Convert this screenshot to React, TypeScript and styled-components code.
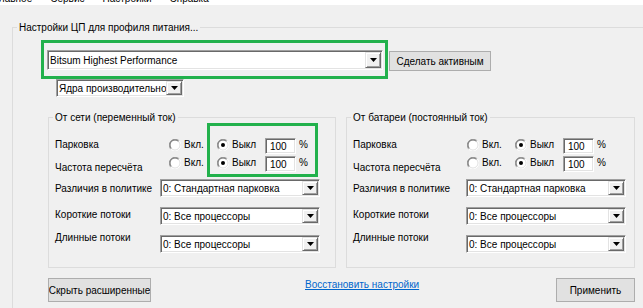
import React from "react";
import styled, { createGlobalStyle } from "styled-components";

const GREEN = "#22b14c";

const GlobalStyle = createGlobalStyle`
  html, body {
    margin: 0;
    padding: 0;
    background: #f0f0f0;
  }
`;

const Window = styled.div`
  width: 643px;
  height: 308px;
  overflow: hidden;
  background: #f0f0f0;
  font-family: "Liberation Sans", Arial, sans-serif;
  font-size: 10px;
  line-height: 13px;
  color: #000;
`;

const MenuBar = styled.div`
  height: 5px;
  background: #fff;
  overflow: hidden;
  display: flex;
  gap: 18px;
`;

const MenuItem = styled.span`
  margin-top: -8px;
  white-space: nowrap;
  &:first-child {
    margin-left: -6px;
  }
`;

const Page = styled.div`
  padding: 22px 0 0 12px;
`;

const GroupBox = styled.div<{ $width: number; $padBottom?: number }>`
  box-sizing: border-box;
  width: ${(p) => p.$width}px;
  border: 1px solid #dcdcdc;
  padding-bottom: ${(p) => p.$padBottom ?? 0}px;
`;

const GroupTitle = styled.div`
  width: max-content;
  margin: -7px 0 0 4px;
  padding: 0 2px;
  background: #f0f0f0;
  white-space: nowrap;
`;

const OuterContent = styled.div`
  padding-left: 28px;
  min-height: 300px;
`;

const TopRow = styled.div`
  display: flex;
  align-items: flex-start;
  margin-top: 6px;
`;

const Highlight = styled.div<{ $on?: boolean; $pad: string }>`
  border: 3px solid ${(p) => (p.$on ? GREEN : "transparent")};
  padding: ${(p) => p.$pad};
`;

const Button = styled.div<{ $w: number; $h: number }>`
  box-sizing: border-box;
  width: ${(p) => p.$w}px;
  height: ${(p) => p.$h}px;
  background: #e1e1e1;
  border: 1px solid #adadad;
  display: flex;
  align-items: center;
  justify-content: center;
  white-space: nowrap;
  overflow: hidden;
  flex: none;
`;

const ActiveButton = styled(Button)`
  margin: 11px 0 0 1px;
`;

const ComboFrame = styled.div<{ $w: number; $h: number }>`
  box-sizing: border-box;
  display: flex;
  flex: none;
  width: ${(p) => p.$w}px;
  height: ${(p) => p.$h}px;
  background: #fff;
  border: 1px solid;
  border-color: #a0a0a0 #ffffff #ffffff #a0a0a0;
  box-shadow: inset 1px 1px 0 #696969, inset -1px -1px 0 #e3e3e3;
  padding: 1px;
`;

const ComboText = styled.div`
  flex: 1;
  min-width: 0;
  overflow: hidden;
  white-space: nowrap;
  padding-left: 1px;
  display: flex;
  align-items: center;
`;

const DropButton = styled.div`
  box-sizing: border-box;
  width: 16px;
  flex: none;
  display: flex;
  align-items: center;
  justify-content: center;
  background: #f0f0f0;
  border: 1px solid;
  border-color: #e3e3e3 #696969 #696969 #e3e3e3;
  box-shadow: inset 1px 1px 0 #fff, inset -1px -1px 0 #a0a0a0;
`;

const CoreCombo = styled.div`
  margin-left: 15px;
`;

const GroupsRow = styled.div`
  display: flex;
  gap: 10px;
  margin: 20px 0 0 7px;
`;

const SwitchSection = styled.div`
  display: flex;
  margin-top: -1px;
`;

const LabelCol = styled.div`
  box-sizing: border-box;
  width: 120px;
  padding: 15px 0 0 6px;
  display: flex;
  flex-direction: column;
  gap: 10px;
  white-space: nowrap;
`;

const OnCol = styled.div`
  width: 38px;
  padding-top: 15px;
  display: flex;
  flex-direction: column;
  gap: 2px;
`;

const RowStack = styled.div`
  display: flex;
  flex-direction: column;
  gap: 2px;
`;

const SwitchRow = styled.div`
  display: flex;
  align-items: flex-start;
  height: 16px;
`;

const RadioItem = styled.div<{ $w?: number }>`
  display: flex;
  align-items: center;
  gap: 3px;
  height: 13px;
  width: ${(p) => (p.$w ? `${p.$w}px` : "auto")};
  flex: none;
  white-space: nowrap;
`;

const ValueInput = styled.div`
  box-sizing: border-box;
  width: 31px;
  height: 16px;
  background: #fff;
  border: 1px solid;
  border-color: #a0a0a0 #ffffff #ffffff #a0a0a0;
  box-shadow: inset 1px 1px 0 #696969, inset -1px -1px 0 #e3e3e3;
  padding-left: 4px;
  display: flex;
  align-items: center;
`;

const Percent = styled.span`
  margin-left: 3px;
`;

const ComboRows = styled.div`
  margin-top: 2px;
  display: flex;
  flex-direction: column;
  gap: 10px;
`;

const ComboRow = styled.div`
  display: flex;
  align-items: flex-start;
`;

const RowLabel = styled.div<{ $w: number; $shift: number }>`
  box-sizing: border-box;
  width: ${(p) => p.$w}px;
  padding-left: 6px;
  margin-top: ${(p) => p.$shift}px;
  white-space: nowrap;
  flex: none;
`;

const BottomRow = styled.div`
  display: flex;
  align-items: flex-start;
  width: 587px;
  margin: 10px 0 0 7px;
`;

const RestoreLink = styled.a`
  color: #0066cc;
  text-decoration: underline;
  margin: 0 0 0 154px;
  cursor: pointer;
  white-space: nowrap;
`;

const ApplyButton = styled(Button)`
  margin-left: auto;
`;

const Arrow = () => (
  <svg width="7" height="4" viewBox="0 0 7 4">
    <polygon points="0,0 7,0 3.5,4" fill="#000" />
  </svg>
);

const Radio = ({ checked }: { checked?: boolean }) => (
  <svg width="12" height="12" viewBox="0 0 12 12" style={{ flex: "none" }}>
    <circle cx="6" cy="6" r="5" fill="#fff" />
    <path d="M1.76 10.24 A6 6 0 0 1 10.24 1.76" stroke="#a0a0a0" fill="none" strokeWidth="1" />
    <path d="M10.24 1.76 A6 6 0 0 1 1.76 10.24" stroke="#ffffff" fill="none" strokeWidth="1" />
    <path d="M2.46 9.54 A5 5 0 0 1 9.54 2.46" stroke="#696969" fill="none" strokeWidth="1" />
    <path d="M9.54 2.46 A5 5 0 0 1 2.46 9.54" stroke="#e3e3e3" fill="none" strokeWidth="1" />
    {checked && <circle cx="6" cy="6" r="2" fill="#000" />}
  </svg>
);

const Combo = ({ w, h, text }: { w: number; h: number; text: string }) => (
  <ComboFrame $w={w} $h={h}>
    <ComboText>{text}</ComboText>
    <DropButton>
      <Arrow />
    </DropButton>
  </ComboFrame>
);

interface PowerGroupProps {
  title: string;
  width: number;
  labelWidth: number;
  highlight?: boolean;
}

const comboRows = [
  { label: "Различия в политике", value: "0: Стандартная парковка", shift: 3 },
  { label: "Короткие потоки", value: "0: Все процессоры", shift: 1 },
  { label: "Длинные потоки", value: "0: Все процессоры", shift: -4 },
];

const PowerGroup = ({ title, width, labelWidth, highlight }: PowerGroupProps) => (
  <GroupBox $width={width} $padBottom={14}>
    <GroupTitle>{title}</GroupTitle>
    <SwitchSection>
      <LabelCol>
        <span>Парковка</span>
        <span>Частота пересчёта</span>
      </LabelCol>
      <OnCol>
        {[0, 1].map((i) => (
          <SwitchRow key={i}>
            <RadioItem>
              <Radio />
              Вкл.
            </RadioItem>
          </SwitchRow>
        ))}
      </OnCol>
      <Highlight $on={highlight} $pad="12px 7px 2px 7px">
        <RowStack>
          {[0, 1].map((i) => (
            <SwitchRow key={i}>
              <RadioItem $w={48}>
                <Radio checked />
                Выкл
              </RadioItem>
              <ValueInput>100</ValueInput>
              <Percent>%</Percent>
            </SwitchRow>
          ))}
        </RowStack>
      </Highlight>
    </SwitchSection>
    <ComboRows>
      {comboRows.map((r) => (
        <ComboRow key={r.label}>
          <RowLabel $w={labelWidth} $shift={r.shift}>
            {r.label}
          </RowLabel>
          <Combo w={160} h={18} text={r.value} />
        </ComboRow>
      ))}
    </ComboRows>
  </GroupBox>
);

export default function App() {
  return (
    <Window>
      <GlobalStyle />
      <MenuBar>
        <MenuItem>Главное</MenuItem>
        <MenuItem>Сервис</MenuItem>
        <MenuItem>Настройки</MenuItem>
        <MenuItem>Справка</MenuItem>
      </MenuBar>
      <Page>
        <GroupBox $width={700}>
          <GroupTitle>Настройки ЦП для профиля питания...</GroupTitle>
          <OuterContent>
            <TopRow>
              <Highlight $on $pad="7px 2px 6px 3px">
                <Combo w={336} h={20} text="Bitsum Highest Performance" />
              </Highlight>
              <ActiveButton $w={102} $h={20}>
                Сделать активным
              </ActiveButton>
            </TopRow>
            <CoreCombo>
              <Combo w={128} h={18} text="Ядра производительности" />
            </CoreCombo>
            <GroupsRow>
              <PowerGroup title="От сети (переменный ток)" width={288} labelWidth={111} highlight />
              <PowerGroup title="От батареи (постоянный ток)" width={289} labelWidth={119} />
            </GroupsRow>
            <BottomRow>
              <Button $w={103} $h={24}>
                Скрыть расширенные
              </Button>
              <RestoreLink>Восстановить настройки</RestoreLink>
              <ApplyButton $w={79} $h={24}>
                Применить
              </ApplyButton>
            </BottomRow>
          </OuterContent>
        </GroupBox>
      </Page>
    </Window>
  );
}
